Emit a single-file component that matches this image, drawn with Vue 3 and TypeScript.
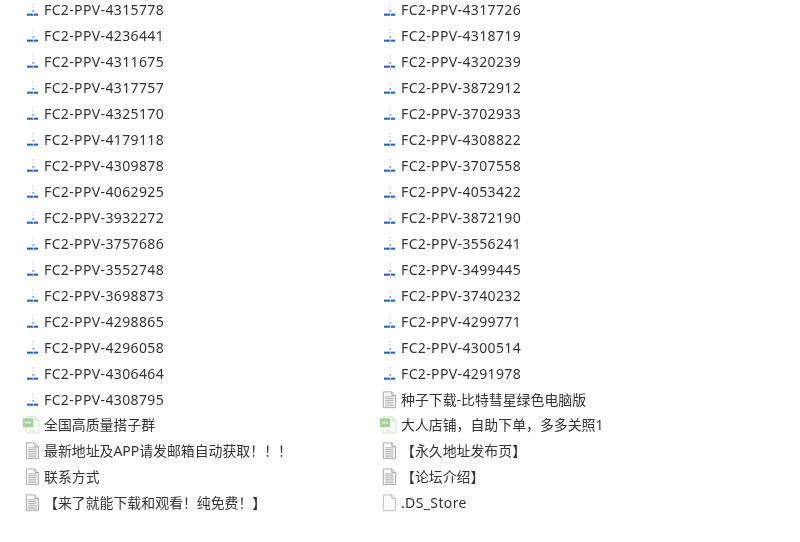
<template>
  <div class="file-list">
    <div v-for="file in files" :key="file.name" class="file-row">
      <svg v-if="file.type === 'video'" class="file-icon" viewBox="0 0 20 20">
        <path d="M9 2v2.500M9 5.500v2.500" class="video-tick" />
        <rect x="8" y="10" width="2.500" height="2" fill="#8fb0de" />
        <rect x="2.200" y="14" width="6.600" height="2.400" fill="#2f66c0" />
        <rect x="9.600" y="14" width="5" height="2.400" fill="#2f66c0" />
      </svg>
      <svg v-else-if="file.type === 'link'" class="file-icon wide" viewBox="0 0 20 20">
        <path d="M4.500 0.500h10l4.500 4.500v14H4.500z" fill="#f8faf5" stroke="#dbe1d5" />
        <path d="M14.500 0.500v4.500h4.500" fill="#e6ebe0" stroke="#dbe1d5" />
        <rect x="1" y="2.500" width="11.500" height="10" fill="#a9cf9b" />
        <rect x="3" y="6.500" width="7" height="1.800" fill="#e4f1de" />
        <path d="M7 18l3-4 6 4z" fill="#e9ece5" />
      </svg>
      <svg v-else class="file-icon" viewBox="0 0 20 20">
        <path d="M1.500 1h9.500l4 4v13.500H1.500z" fill="#fbfbfb" :stroke="file.type === 'text' ? '#a3a3a3' : '#b8b8b8'" />
        <path d="M11 1v4h4" fill="#ececec" :stroke="file.type === 'text' ? '#a3a3a3' : '#b8b8b8'" />
        <template v-if="file.type === 'text'">
          <path v-for="y in lines" :key="y" :d="`M3.500 ${y}h9.500`" class="text-line" />
        </template>
      </svg>
      <span class="file-name" :class="{ latin: file.type === 'video' || file.type === 'blank' }">{{ file.name }}</span>
    </div>
  </div>
</template>

<script setup lang="ts">
type FileType = 'video' | 'link' | 'text' | 'blank'

interface FileItem {
  name: string
  type: FileType
}

const lines = [6.5, 8.5, 10.5, 12.5, 14.5, 16.5]

const leftVideos = [
  '4315778', '4236441', '4311675', '4317757', '4325170', '4179118', '4309878', '4062925',
  '3932272', '3757686', '3552748', '3698873', '4298865', '4296058', '4306464', '4308795',
]
const rightVideos = [
  '4317726', '4318719', '4320239', '3872912', '3702933', '4308822', '3707558', '4053422',
  '3872190', '3556241', '3499445', '3740232', '4299771', '4300514', '4291978',
]

const video = (id: string): FileItem => ({ name: `FC2-PPV-${id}`, type: 'video' })

// 按行排列：左列、右列交替
const left: FileItem[] = [
  ...leftVideos.map(video),
  { name: '全国高质量搭子群', type: 'link' },
  { name: '最新地址及APP请发邮箱自动获取！！！', type: 'text' },
  { name: '联系方式', type: 'text' },
  { name: '【来了就能下载和观看！纯免费！】', type: 'text' },
]
const right: FileItem[] = [
  ...rightVideos.map(video),
  { name: '种子下载-比特彗星绿色电脑版', type: 'text' },
  { name: '大人店铺，自助下单，多多关照1', type: 'link' },
  { name: '【永久地址发布页】', type: 'text' },
  { name: '【论坛介绍】', type: 'text' },
  { name: '.DS_Store', type: 'blank' },
]

const files: FileItem[] = left.flatMap((item, i) => [item, right[i]])
</script>

<style scoped>
.file-list {
  display: grid;
  grid-template-columns: 357px 1fr;
  grid-auto-rows: 25.95px;
  padding-left: 24px;
  margin-top: -2.5px;
  font-family: "Noto Sans", "Noto Sans CJK SC", sans-serif;
  font-size: 13.9px;
  line-height: 18px;
  color: #333;
  filter: blur(0.35px);
}

.file-row {
  display: flex;
  align-items: center;
  gap: 1px;
  white-space: nowrap;
}

.file-icon {
  width: 18px;
  height: 18px;
  flex: none;
  margin-left: 1px;
}

.file-icon.wide {
  margin-left: -2px;
  margin-right: 3px;
}

.file-name.latin {
  font-size: 14px;
  letter-spacing: 0.37px;
}

.video-tick {
  stroke: #d0d0d0;
  stroke-width: 1;
  fill: none;
}

.text-line {
  stroke: #aaa;
  stroke-width: 1;
}
</style>

<style>
html,
body {
  background: #fff;
  overflow: hidden;
}
</style>
